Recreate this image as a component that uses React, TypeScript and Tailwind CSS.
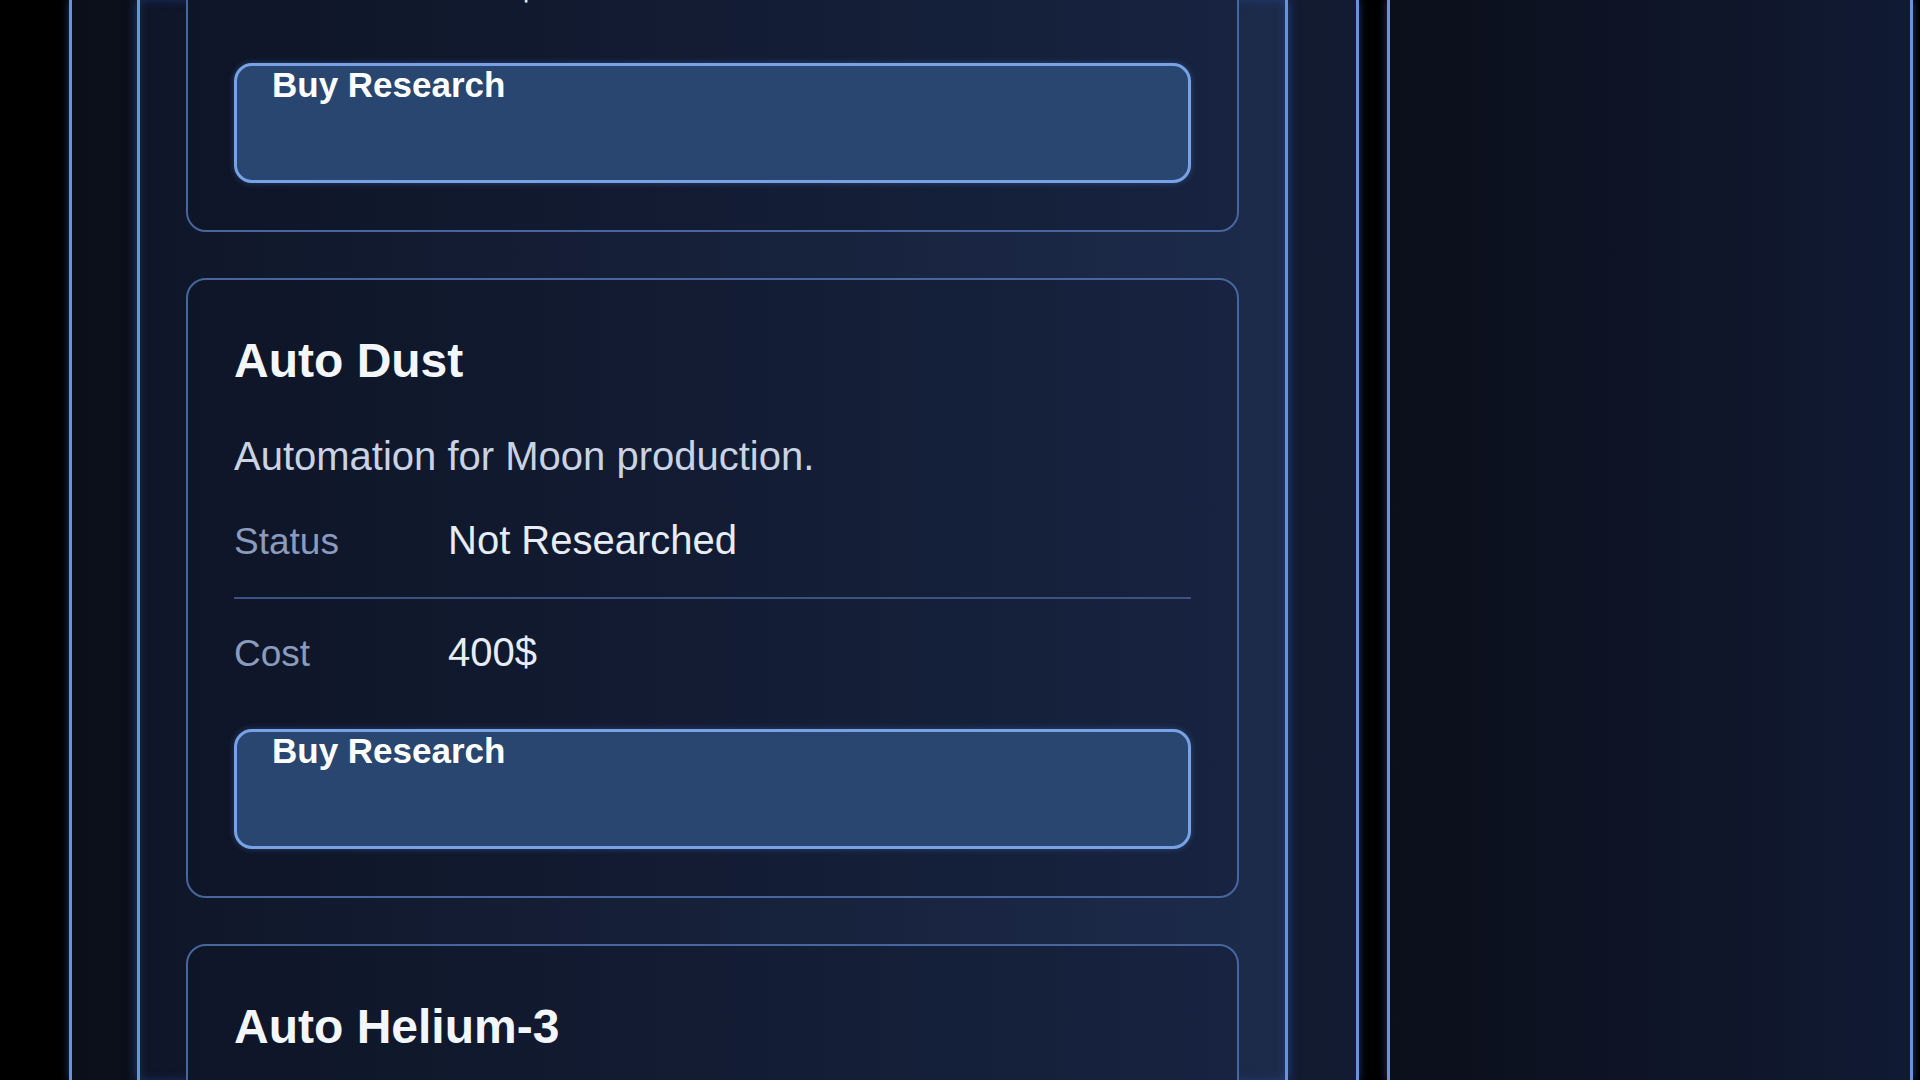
import { useLayoutEffect, useRef } from 'react'

type Research = {
  name: string
  description: string
  status: string
  cost: string
}

const RESEARCH: Research[] = [
  { name: 'Auto Regolith', description: 'Automation for Earth production.', status: 'Not Researched', cost: '400$' },
  { name: 'Auto Dust', description: 'Automation for Moon production.', status: 'Not Researched', cost: '400$' },
  { name: 'Auto Helium-3', description: 'Automation for Mars production.', status: 'Not Researched', cost: '400$' },
]

function InfoRow({ label, value, className = '' }: { label: string; value: string; className?: string }) {
  return (
    <div className={`flex items-baseline ${className}`}>
      <span className="w-[214px] shrink-0 text-[37px] leading-[40px] text-[#8a9bbd]">{label}</span>
      <span className="text-[40px] leading-[46px] text-[#e7edf6]">{value}</span>
    </div>
  )
}

function ResearchCard({ item }: { item: Research }) {
  return (
    <div className="rounded-[20px] border-2 border-[#46669d] bg-gradient-to-r from-[#0e1527] to-[#172340] px-[46px] pt-[53px] pb-[47px]">
      <h2 className="text-[48px] font-bold leading-[55px] text-[#f3f6fb]">{item.name}</h2>
      <p className="mt-[45px] text-[40px] leading-[46px] text-[#c9d3e3]">{item.description}</p>
      <InfoRow
        label="Status"
        value={item.status}
        className="mt-[38px] pb-[34px] border-b-2 border-[#3b5282]"
      />
      <InfoRow label="Cost" value={item.cost} className="pt-[30px]" />
      <button className="mt-[54px] flex h-[120px] w-full items-start rounded-[18px] border-[3px] border-[#78a2e6] bg-[#28466f] px-[35px] text-left text-[35px] font-bold leading-[38px] text-white shadow-[0_0_6px_rgba(90,140,220,0.35)]">
        Buy Research
      </button>
    </div>
  )
}

export default function App() {
  const listRef = useRef<HTMLDivElement>(null)

  // the reference is scrolled part way down the research list
  useLayoutEffect(() => {
    if (listRef.current) listRef.current.scrollTop = 434
  }, [])

  return (
    <div className="flex h-screen w-full gap-[28px] overflow-hidden bg-black pl-[69px] font-['Liberation_Sans',Arial,sans-serif]">
      {/* Left: research panel */}
      <div className="flex h-full w-[1290px] shrink-0 border-x-[3px] border-[#6a92d6] bg-gradient-to-r from-[#0b0f1a] to-[#131b32] pl-[65px] pr-[68px] shadow-[0_0_8px_rgba(60,110,210,0.55)]">
        <div className="h-full flex-1 border-x-[3px] border-[#6a92d6] bg-gradient-to-r from-[#0f1629] to-[#1d2b4b] shadow-[0_0_10px_rgba(40,95,200,0.6),inset_0_0_8px_rgba(40,95,200,0.35)]">
          <div ref={listRef} className="h-full overflow-hidden">
            <div className="flex flex-col gap-[46px] px-[46px] pt-[46px] pb-[46px]">
              {RESEARCH.map(item => (
                <ResearchCard key={item.name} item={item} />
              ))}
            </div>
          </div>
        </div>
      </div>

      {/* Right: side panel */}
      <div className="h-full w-[526px] shrink-0 border-x-[3px] border-[#6a92d6] bg-gradient-to-r from-[#0b0f1a] to-[#111a34] shadow-[0_0_8px_rgba(60,110,210,0.55)]" />
    </div>
  )
}
